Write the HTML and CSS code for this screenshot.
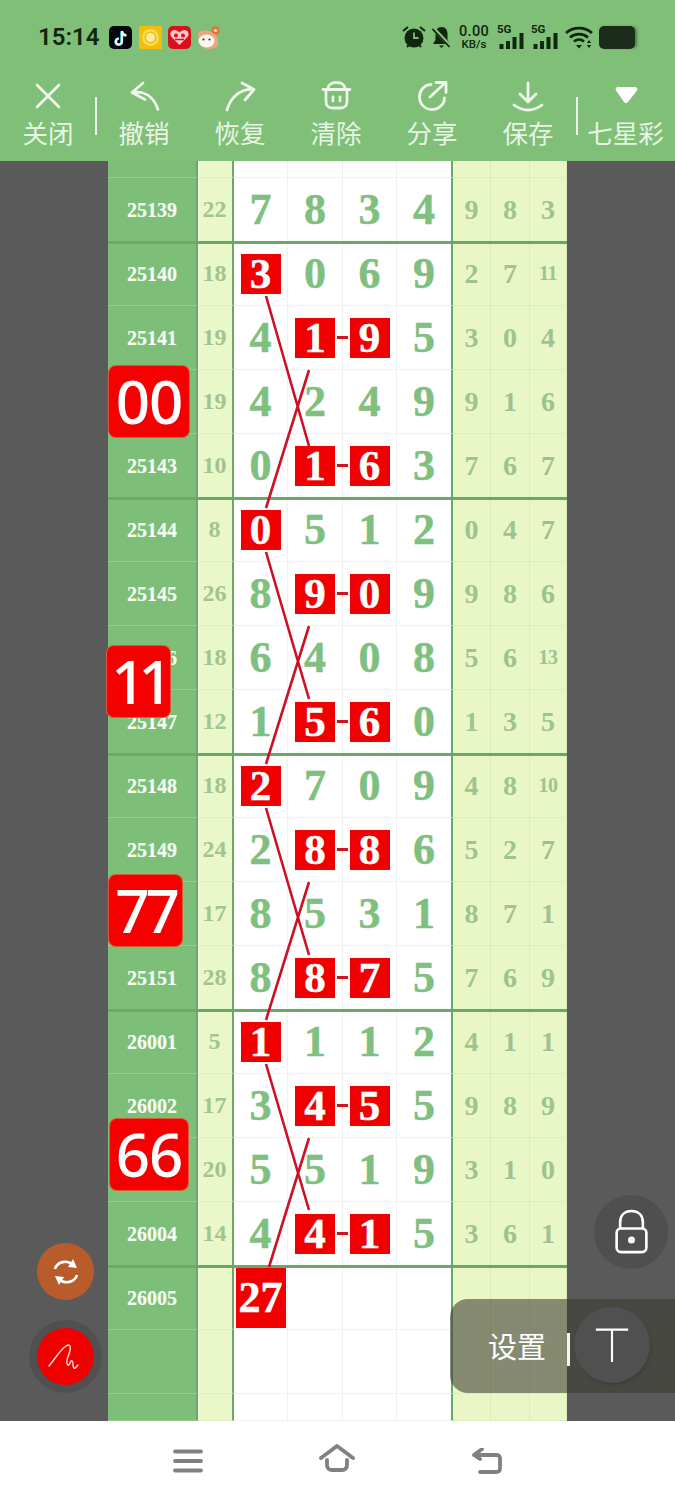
FILE: index.html
```html
<!DOCTYPE html>
<html lang="zh-CN">
<head>
<meta charset="utf-8">
<title>七星彩</title>
<link rel="stylesheet" href="styles.css">
</head>
<body>
<div class="phone">
<header class="head">
  <div class="status">
    <span class="time">15:14</span>
    <div class="apps">
      <svg class="app" viewBox="0 0 23 23"><rect width="23" height="23" rx="5" fill="#07070c"/><path d="M13 5v10.5a3 3 0 1 1-3-3M13 5c.3 2.6 1.900 4 4.500 4.300" fill="none" stroke="#25d8e0" stroke-width="2.400" transform="translate(-.6 .4)"/><path d="M13 5v10.500a3 3 0 1 1-3-3M13 5c.3 2.600 1.900 4 4.500 4.300" fill="none" stroke="#f4f4f4" stroke-width="2.200"/></svg>
      <svg class="app" viewBox="0 0 23 23"><rect width="23" height="23" fill="#f5bd0a"/><circle cx="11.500" cy="11.500" r="8.500" fill="#f8dc55"/><circle cx="11.500" cy="11.500" r="6" fill="#f5bd0a"/><circle cx="11.500" cy="11.500" r="4.500" fill="#fbeea0"/></svg>
      <svg class="app" viewBox="0 0 23 23"><rect width="23" height="23" rx="5" fill="#d90f1c"/><path d="M11.500 19 3.500 11c-2.500-3-.5-7 3-7 2 0 3.500 1 5 2.500C13 5 14.500 4 16.500 4c3.500 0 5.500 4 3 7z" fill="#f8c6c6"/><circle cx="8" cy="9.500" r="2" fill="#d90f1c"/><circle cx="15" cy="9.500" r="2" fill="#d90f1c"/><path d="M7 13.500h9" stroke="#d90f1c" stroke-width="1.500"/></svg>
      <svg class="app" viewBox="0 0 23 23"><circle cx="17.500" cy="4.500" r="4" fill="#e8713a"/><circle cx="17.500" cy="4.500" r="1.600" fill="#f7e0b0"/><path d="M0 7c4-3 9-3 13-1 4 2 8 5 7 12-1 4-5 5-9 5-6 0-11-4-11-16z" fill="#eda684"/><ellipse cx="8.500" cy="15" rx="8" ry="6.500" fill="#fdf6ee"/><circle cx="5.500" cy="13.500" r="1.100" fill="#333"/><circle cx="11.500" cy="13.500" r="1.100" fill="#333"/></svg>
    </div>
    <div class="sys">
      <svg class="alarm" viewBox="0 0 24 24"><circle cx="12" cy="13" r="9.500" fill="#10260f"/><path d="M12 7.500V13h4.500" fill="none" stroke="#7fbf78" stroke-width="1.800"/><path d="M1 6l5-4M23 6l-5-4M5 22l2-2M19 22l-2-2" stroke="#10260f" stroke-width="2"/></svg>
      <svg class="bell" viewBox="0 0 21 22"><path d="M10.500 1c-4 0-6 3-6 7v6l-2.500 4h17l-2.500-4V8c0-4-2-7-6-7zM8 19.500h5l-2.500 2.500z" fill="#10260f"/><path d="M2 2l17 18" stroke="#7fbf78" stroke-width="4"/><path d="M1.500 3l17 18" stroke="#10260f" stroke-width="1.800"/></svg>
      <div class="speed"><span class="speed-n">0.00</span><span class="speed-u">KB/s</span></div>
      <div class="sig">
        <span class="sig-t">5G</span>
        <svg class="bars" viewBox="0 0 25 16"><path d="M1 11h4v5H1zM7.500 8h4v8h-4zM14 4h4v12h-4zM21 0h4v16h-4z" fill="#10260f"/></svg>
      </div>
      <div class="sig">
        <span class="sig-t">5G</span>
        <svg class="bars" viewBox="0 0 25 16"><path d="M1 11h4v5H1zM7.500 8h4v8h-4zM14 4h4v12h-4zM21 0h4v16h-4z" fill="#10260f"/></svg>
      </div>
      <svg class="wifi" viewBox="0 0 28 24"><g fill="none" stroke="#10260f" stroke-width="2.800"><path d="M1 8c7-6.500 19-6.500 26 0"/><path d="M5 12.500c5-4.500 13-4.500 18 0"/><path d="M9 16.500c3-2.500 7-2.500 10 0"/></g><path d="M11 20h6l-3 3.500z" fill="#10260f"/><path d="M24 15l2.200 3h-4.400zM24 23l2.200-3h-4.400z" fill="#10260f"/></svg>
      <div class="batt"></div>
    </div>
  </div>
  <nav class="tools">
    <div class="tool">
      <svg class="ico" viewBox="0 0 32 32"><path d="M5 5l22 22M27 5L5 27"/></svg>
      <span class="lbl">关闭</span>
    </div>
    <div class="tool">
      <svg class="ico" viewBox="0 0 32 32"><path d="M15 3L4 12.500l13 7M4 12.500c13-2 22 5 26 17"/></svg>
      <span class="lbl">撤销</span>
    </div>
    <div class="tool">
      <svg class="ico" viewBox="0 0 32 32"><path d="M18 3l12 6.500-9 10.500M30 9.500C18 8 7 16 3 30"/></svg>
      <span class="lbl">恢复</span>
    </div>
    <div class="tool">
      <svg class="ico" viewBox="0 0 32 32"><path d="M3 9.500h27M8 9c0-4 3-6.500 8.500-6.500S25 5 25 9M6 10v11c0 5 2 7 7 7h7c5 0 7-2 7-7V10M13 17v4M20 17v4"/></svg>
      <span class="lbl">清除</span>
    </div>
    <div class="tool">
      <svg class="ico" viewBox="0 0 32 32"><path d="M15 4.500C8 5 3.500 10.500 3.500 17c0 7 5.500 12.500 12.500 12.500S28.500 24 28.500 18M14 17L29 3M20 2.500h10v10"/></svg>
      <span class="lbl">分享</span>
    </div>
    <div class="tool">
      <svg class="ico" viewBox="0 0 32 32"><path d="M16 3v18M8 14l8 8 8-8M2 25c4 3 9 5 14 5s10-2 14-5"/></svg>
      <span class="lbl">保存</span>
    </div>
    <div class="tool">
      <svg class="ico" viewBox="0 0 32 32"><path class="ico-fill" d="M8 7h17c2 0 3 2 2 3.500L18 22c-1 1.500-3 1.500-4 0L6 10.500C5 9 6 7 8 7z"/></svg>
      <span class="lbl">七星彩</span>
    </div>
  </nav>
</header>

<main class="stage">
  <div class="board">
    <div class="row stub"><div class="c id"></div><div class="c sum"></div><div class="c n"></div><div class="c n"></div><div class="c n"></div><div class="c n end"></div><div class="c s"></div><div class="c s"></div><div class="c s"></div></div>

    <div class="row"><div class="c id">25139</div><div class="c sum">22</div><div class="c n">7</div><div class="c n">8</div><div class="c n">3</div><div class="c n end">4</div><div class="c s">9</div><div class="c s">8</div><div class="c s">3</div></div>

    <div class="row group"><div class="c id">25140</div><div class="c sum">18</div><div class="c n"><b class="hit">3</b></div><div class="c n">0</div><div class="c n">6</div><div class="c n end">9</div><div class="c s">2</div><div class="c s">7</div><div class="c s small">11</div></div>
    <div class="row"><div class="c id">25141</div><div class="c sum">19</div><div class="c n">4</div><div class="c n dash"><b class="hit">1</b></div><div class="c n"><b class="hit">9</b></div><div class="c n end">5</div><div class="c s">3</div><div class="c s">0</div><div class="c s">4</div></div>
    <div class="row"><div class="c id">25142</div><div class="c sum">19</div><div class="c n">4</div><div class="c n">2</div><div class="c n">4</div><div class="c n end">9</div><div class="c s">9</div><div class="c s">1</div><div class="c s">6</div></div>
    <div class="row"><div class="c id">25143</div><div class="c sum">10</div><div class="c n">0</div><div class="c n dash"><b class="hit">1</b></div><div class="c n"><b class="hit">6</b></div><div class="c n end">3</div><div class="c s">7</div><div class="c s">6</div><div class="c s">7</div></div>

    <div class="row group"><div class="c id">25144</div><div class="c sum">8</div><div class="c n"><b class="hit">0</b></div><div class="c n">5</div><div class="c n">1</div><div class="c n end">2</div><div class="c s">0</div><div class="c s">4</div><div class="c s">7</div></div>
    <div class="row"><div class="c id">25145</div><div class="c sum">26</div><div class="c n">8</div><div class="c n dash"><b class="hit">9</b></div><div class="c n"><b class="hit">0</b></div><div class="c n end">9</div><div class="c s">9</div><div class="c s">8</div><div class="c s">6</div></div>
    <div class="row"><div class="c id">25146</div><div class="c sum">18</div><div class="c n">6</div><div class="c n">4</div><div class="c n">0</div><div class="c n end">8</div><div class="c s">5</div><div class="c s">6</div><div class="c s small">13</div></div>
    <div class="row"><div class="c id">25147</div><div class="c sum">12</div><div class="c n">1</div><div class="c n dash"><b class="hit">5</b></div><div class="c n"><b class="hit">6</b></div><div class="c n end">0</div><div class="c s">1</div><div class="c s">3</div><div class="c s">5</div></div>

    <div class="row group"><div class="c id">25148</div><div class="c sum">18</div><div class="c n"><b class="hit">2</b></div><div class="c n">7</div><div class="c n">0</div><div class="c n end">9</div><div class="c s">4</div><div class="c s">8</div><div class="c s small">10</div></div>
    <div class="row"><div class="c id">25149</div><div class="c sum">24</div><div class="c n">2</div><div class="c n dash"><b class="hit">8</b></div><div class="c n"><b class="hit">8</b></div><div class="c n end">6</div><div class="c s">5</div><div class="c s">2</div><div class="c s">7</div></div>
    <div class="row"><div class="c id">25150</div><div class="c sum">17</div><div class="c n">8</div><div class="c n">5</div><div class="c n">3</div><div class="c n end">1</div><div class="c s">8</div><div class="c s">7</div><div class="c s">1</div></div>
    <div class="row"><div class="c id">25151</div><div class="c sum">28</div><div class="c n">8</div><div class="c n dash"><b class="hit">8</b></div><div class="c n"><b class="hit">7</b></div><div class="c n end">5</div><div class="c s">7</div><div class="c s">6</div><div class="c s">9</div></div>

    <div class="row group"><div class="c id">26001</div><div class="c sum">5</div><div class="c n"><b class="hit">1</b></div><div class="c n">1</div><div class="c n">1</div><div class="c n end">2</div><div class="c s">4</div><div class="c s">1</div><div class="c s">1</div></div>
    <div class="row"><div class="c id">26002</div><div class="c sum">17</div><div class="c n">3</div><div class="c n dash"><b class="hit">4</b></div><div class="c n"><b class="hit">5</b></div><div class="c n end">5</div><div class="c s">9</div><div class="c s">8</div><div class="c s">9</div></div>
    <div class="row"><div class="c id">26003</div><div class="c sum">20</div><div class="c n">5</div><div class="c n">5</div><div class="c n">1</div><div class="c n end">9</div><div class="c s">3</div><div class="c s">1</div><div class="c s">0</div></div>
    <div class="row"><div class="c id">26004</div><div class="c sum">14</div><div class="c n">4</div><div class="c n dash"><b class="hit">4</b></div><div class="c n"><b class="hit">1</b></div><div class="c n end">5</div><div class="c s">3</div><div class="c s">6</div><div class="c s">1</div></div>

    <div class="row group"><div class="c id">26005</div><div class="c sum"></div><div class="c n"><b class="hit big">27</b></div><div class="c n"></div><div class="c n"></div><div class="c n end"></div><div class="c s"></div><div class="c s"></div><div class="c s"></div></div>
    <div class="row"><div class="c id"></div><div class="c sum"></div><div class="c n"></div><div class="c n"></div><div class="c n"></div><div class="c n end"></div><div class="c s"></div><div class="c s"></div><div class="c s"></div></div>
    <div class="row stub"><div class="c id"></div><div class="c sum"></div><div class="c n"></div><div class="c n"></div><div class="c n"></div><div class="c n end"></div><div class="c s"></div><div class="c s"></div><div class="c s"></div></div>

    <svg class="lines" viewBox="0 0 459 1260">
      <path d="M158 135L201 285M201 209L158 347M158 391L201 538M201 465L158 603M158 647L201 794M201 721L158 859M158 903L201 1049M201 977L161 1106"/>
    </svg>
  </div>

  <span class="stick s00">00</span>
  <span class="stick s11">11</span>
  <span class="stick s77">77</span>
  <span class="stick s66">66</span>

  <div class="fab sync">
    <svg viewBox="0 0 32 32"><path d="M5 13c2-7 12-10 18-4M27 19c-2 7-12 10-18 4" fill="none" stroke="#fff" stroke-width="2.600"/><path d="M23 3l4 9-9-1zM9 29l-4-9 9 1z" fill="#fff"/></svg>
  </div>
  <div class="fab pen">
    <svg viewBox="0 0 36 36"><path d="M1 27C7 20 12 11 18 7c5-3 5 2 3 8-2 5-3 10-1 11 2 1 2-5 4-4 2 1 0 6 2 7 2 1 3-3 4-3" fill="none" stroke="#ffd9d0" stroke-width="1.500" stroke-linecap="round"/></svg>
  </div>
  <div class="fab lock">
    <svg viewBox="0 0 40 52"><path d="M7 22V15C7 7 12 2 20 2s13 5 13 13v7" fill="none" stroke="#fff" stroke-width="3"/><rect x="3" y="22" width="34" height="27" rx="5" fill="none" stroke="#fff" stroke-width="3"/><circle cx="20" cy="35" r="4" fill="#fff"/></svg>
  </div>
  <div class="panel">
    <span class="panel-t">设置</span>
    <i class="panel-bar"></i>
    <div class="tbtn"><svg viewBox="0 0 40 40"><path d="M2 3h36M20 3v36" fill="none" stroke="#fff" stroke-width="2.400"/></svg></div>
  </div>
</main>

<footer class="nav">
  <svg class="nav-i menu" viewBox="0 0 30 24"><path d="M2 2.500h26M2 12h26M2 21.500h26"/></svg>
  <svg class="nav-i home" viewBox="0 0 36 28"><path d="M2 14L18 2l16 12M8 16v5c0 3 2 5 5 5h10c3 0 5-2 5-5v-5"/></svg>
  <svg class="nav-i back" viewBox="0 0 32 26"><path d="M3 7h22c3 0 4 1 4 4v9c0 3-1 4-4 4H9M11 1L3 7l6 4"/></svg>
</footer>
</div>
</body>
</html>
```
FILE: styles.css
```css
* { box-sizing: border-box; }
html, body { margin: 0; padding: 0; }
body { background: #fff; font-family: "Noto Sans CJK SC", "Noto Sans", sans-serif; }

.phone { width: 675px; height: 1500px; display: flex; flex-direction: column; overflow: hidden; }

/* header */
.head { height: 161px; background: #7fbf78; flex: none; display: flex; flex-direction: column; }
.status { height: 74px; display: flex; align-items: center; padding: 0 40px 0 38px; color: #10260f; }
.time { font: 600 24px/28px Roboto, "Liberation Sans", sans-serif; width: 71px; }
.apps { display: flex; gap: 6.500px; }
.app { width: 23px; height: 23px; display: block; }
.sys { margin-left: auto; display: flex; align-items: center; }
.alarm { width: 24px; height: 24px; margin-right: 5px; }
.bell { width: 21px; height: 22px; margin-right: 7px; }
.speed { width: 30px; display: flex; flex-direction: column; align-items: center; font-family: Roboto, sans-serif; font-weight: 500; margin-right: 8px; }
.speed-n { font-size: 14.500px; line-height: 14px; letter-spacing: .3px; }
.speed-u { font-size: 11.500px; line-height: 11px; }
.sig { position: relative; width: 27px; height: 24px; margin-right: 7px; }
.sig-t { position: absolute; left: 0; top: -1px; font: 700 11.500px/11px Roboto, sans-serif; }
.bars { position: absolute; left: 1px; top: 8px; width: 26px; height: 16px; }
.wifi { width: 28px; height: 24px; margin: 0 6px 0 0; }
.batt { width: 36px; height: 23px; border-radius: 5px; background: #1b2d1a; box-shadow: 3px 0 3px -1px #4f7d4b; }

.tools { display: grid; grid-template-columns: repeat(6, 96px) 1fr; }
.tool { position: relative; display: flex; flex-direction: column; align-items: center; color: #e8f4e4; }
.tool:nth-child(1)::after, .tool:nth-child(6)::after { content: ""; position: absolute; top: 23px; width: 2px; height: 38px; background: #e8f4e5; }
.tool:nth-child(1)::after { right: -1px; }
.tool:nth-child(6)::after { right: -2px; }
.ico { width: 32px; height: 32px; margin-top: 6px; fill: none; stroke: #edf7ea; stroke-width: 2.800; stroke-linecap: round; stroke-linejoin: round; }
.ico-fill { fill: #fff; stroke: none; }
.lbl { font-size: 25.500px; line-height: 30px; margin-top: 5px; font-weight: 400; white-space: nowrap; }

/* board */
.stage { position: relative; height: 1260px; flex: none; background: #5a5a5a; overflow: hidden; }
.board { position: relative; width: 459px; margin-left: 108px; font-family: "Liberation Serif", serif; font-weight: 700; }
.row { position: relative; height: 64px; display: grid; grid-template-columns: 90px 36px 54px 55px 54px 56px 38px 39px 37px; }
.row.stub { height: 17px; }
.row.stub:last-of-type { height: 27px; }
.row.group::before { content: ""; position: absolute; z-index: 1; left: 0; right: 0; top: -1px; height: 3px; background: #6ba868; }
.c { display: flex; align-items: center; justify-content: center; position: relative; }
.id { background: #7dbe78; color: #f6fbf2; font-size: 20px; padding-top: 2px; border-right: 2px solid #6ba868; border-bottom: 1px solid #95cf90; -webkit-text-stroke: .2px #f6fbf2; }
.sum { background: #eaf7c8; color: #a2c491; font-size: 24px; padding-right: 2px; border-right: 2px solid #6ba868; border-left: 1px solid #f2f9dd; border-bottom: 1px solid #e0eeb8; }
.n { background: #fff; color: #7fbf80; font-size: 44px; border-right: 1px solid #eef2ee; border-bottom: 1px solid #eef2ee; -webkit-text-stroke: .5px #7fbf80; }
.n.end { border-right: 2px solid #6ba868; }
.s { background: #e9f6c6; color: #9fc38e; font-size: 28px; border-right: 1px solid #dcecb4; border-bottom: 1px solid #dfeeb9; }
.s.small { font-size: 20px; letter-spacing: -.5px; }
.hit { width: 40px; height: 40px; background: #f00000; color: #fff; font-weight: 700; font-size: 43px; display: flex; align-items: center; justify-content: center; -webkit-text-stroke: .5px #fff; }
.hit.big { width: 50px; height: 60px; font-size: 44px; }
.dash::after { content: ""; position: absolute; right: -6px; top: 30px; width: 11px; height: 3px; background: #d81020; z-index: 1; }
.lines { position: absolute; left: 0; top: 0; width: 459px; height: 1260px; pointer-events: none; z-index: 2; }
.lines path { fill: none; stroke: #cc1026; stroke-width: 2.600; }

/* overlays */
.stick { position: absolute; z-index: 3; height: 71px; background: #f40000; color: #fff; border-radius: 7px; font: 500 60px/71px "Noto Sans", sans-serif; text-align: center; box-shadow: 0 0 0 1px #e0583a; }
.s00 { left: 109px; top: 205px; width: 80px; letter-spacing: -1px; }
.s11 { left: 107px; top: 485px; width: 63px; letter-spacing: -7px; }
.s77 { left: 109px; top: 714px; width: 73px; letter-spacing: -4px; }
.s66 { left: 110px; top: 958px; width: 78px; letter-spacing: -1px; }

.fab { position: absolute; z-index: 4; border-radius: 50%; display: flex; align-items: center; justify-content: center; }
.sync { left: 37px; top: 1082px; width: 57px; height: 57px; background: #b85c2c; }
.sync svg { width: 32px; height: 32px; }
.pen { left: 37px; top: 1167px; width: 57px; height: 57px; background: #f00000; box-shadow: 0 0 0 8px #505050; }
.pen svg { width: 36px; height: 36px; }
.lock { left: 594px; top: 1034px; width: 74px; height: 74px; background: #4f4f4f; }
.lock svg { width: 35px; height: 46px; }
.panel { position: absolute; z-index: 4; left: 450px; top: 1138px; width: 225px; height: 94px; background: rgba(60, 60, 50, .58); border-radius: 18px 0 0 18px; }
.panel-t { position: absolute; left: 38px; top: 28px; color: #fff; font-size: 29px; line-height: 36px; }
.panel-bar { position: absolute; left: 117px; top: 34px; width: 3px; height: 33px; background: #f4f4f0; }
.tbtn { position: absolute; left: 124px; top: 8px; width: 76px; height: 76px; border-radius: 50%; background: #505050; box-shadow: 1px 2px 3px #3c3c3c; display: flex; align-items: center; justify-content: center; }
.tbtn svg { width: 36px; height: 38px; margin-left: -1px; }

/* nav */
.nav { flex: 1; background: #fff; display: flex; align-items: center; position: relative; padding: 0 172px 0 173px; justify-content: space-between; }
.nav-i { fill: none; stroke: #808080; stroke-width: 3.800; stroke-linecap: round; stroke-linejoin: round; display: block; }
.menu { width: 30px; height: 24px; }
.home { width: 36px; height: 28px; margin-top: -6px; }
.back { width: 32px; height: 26px; }
```
